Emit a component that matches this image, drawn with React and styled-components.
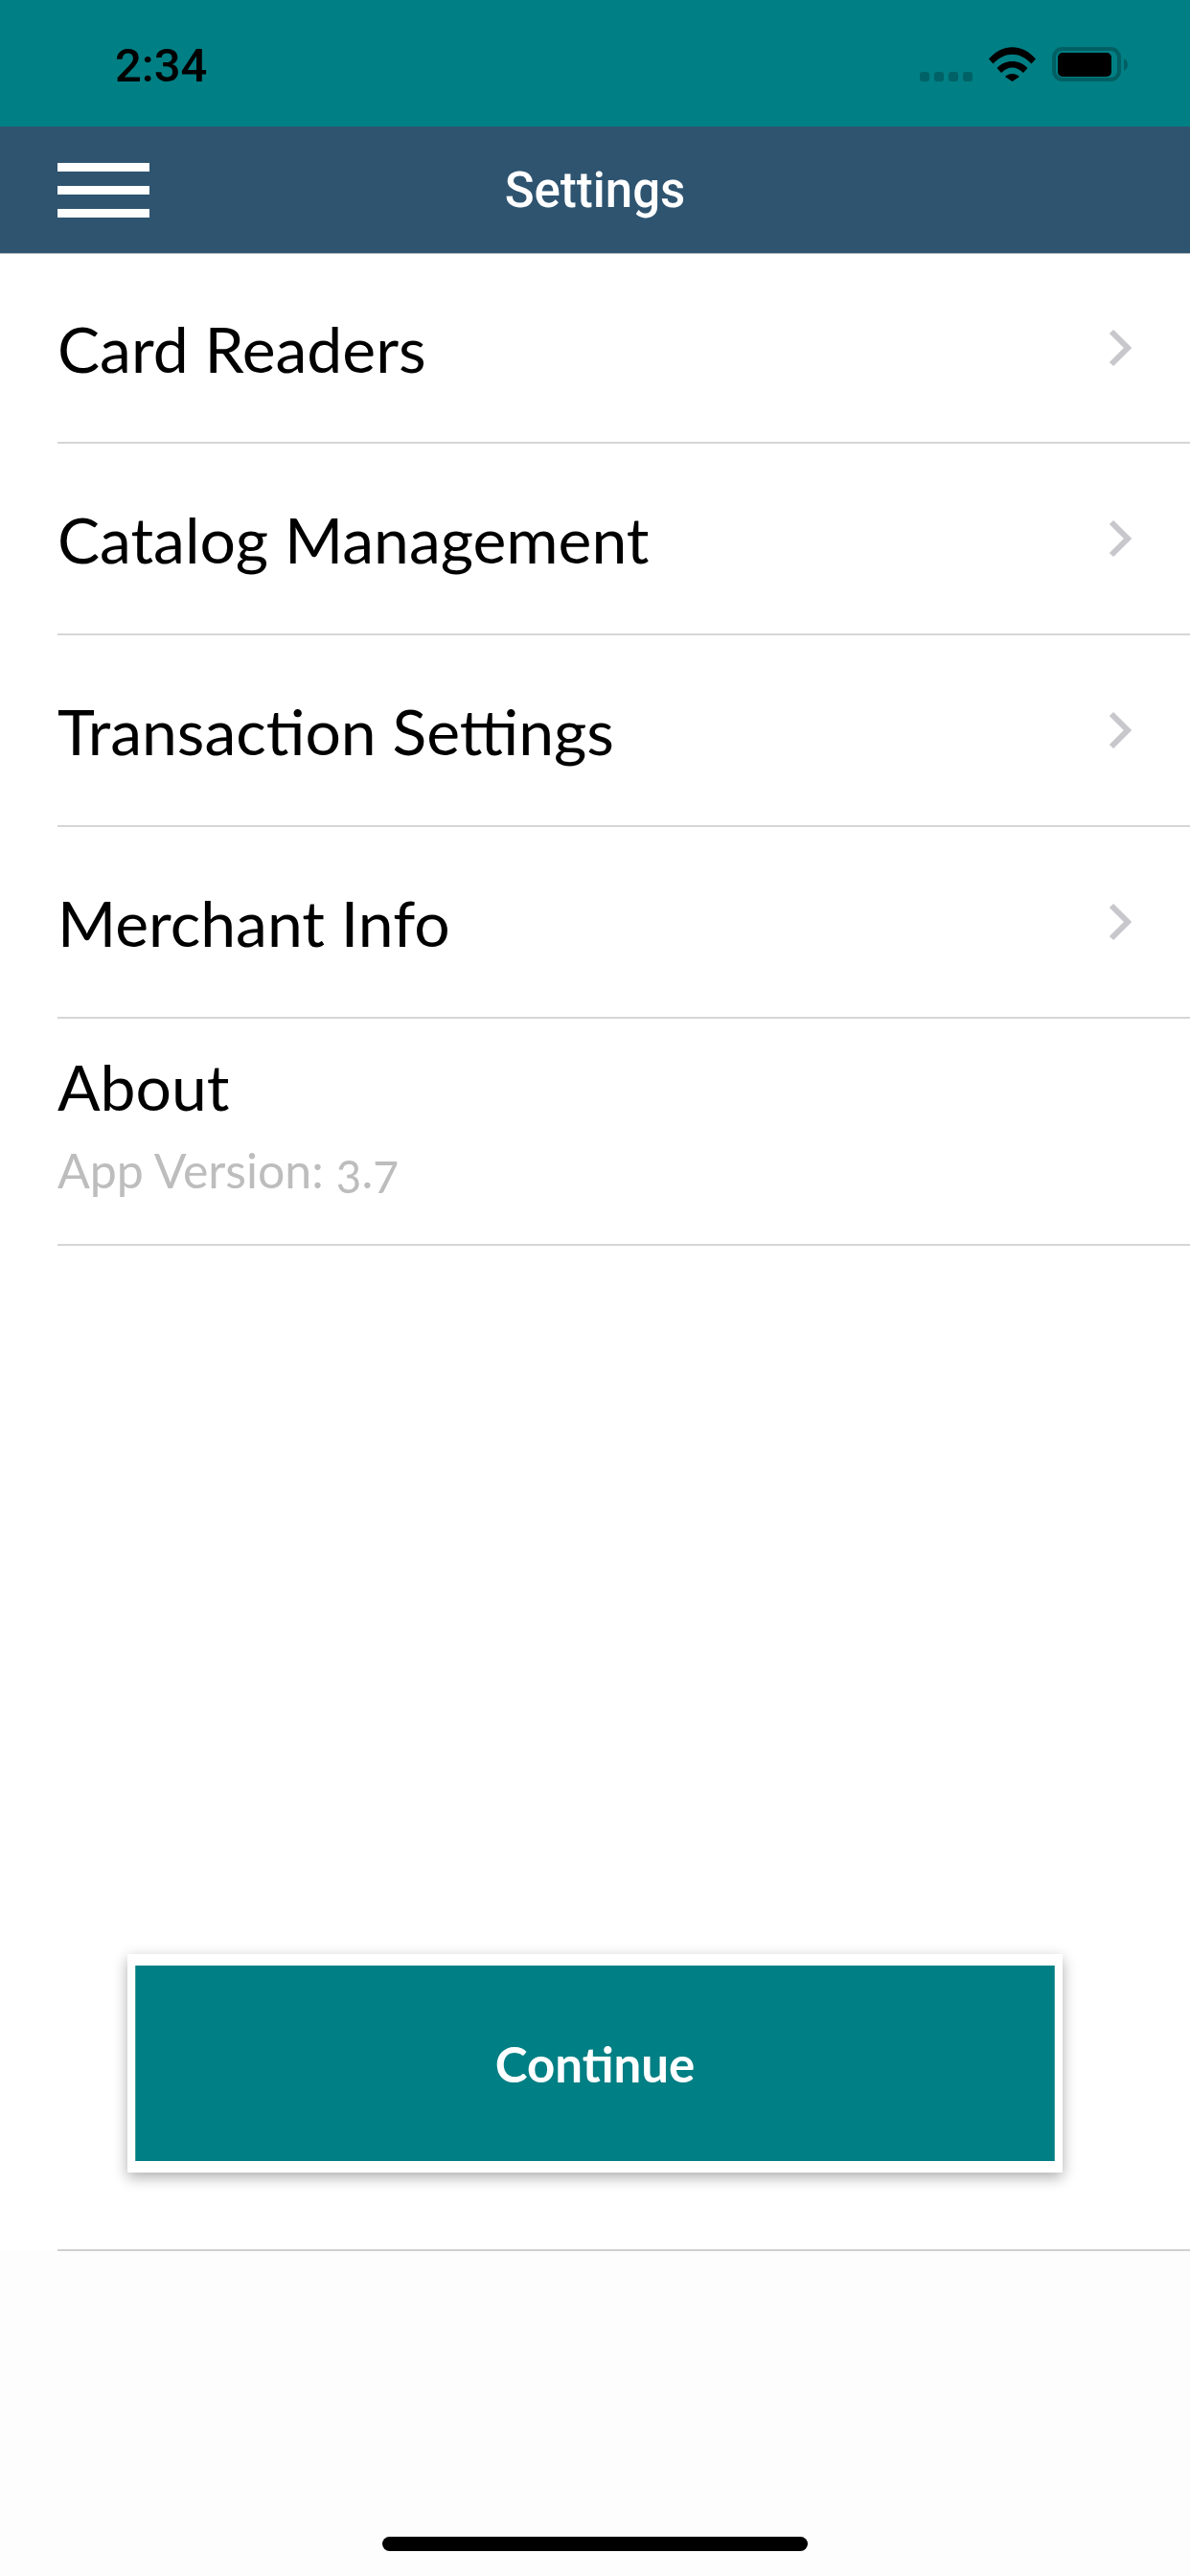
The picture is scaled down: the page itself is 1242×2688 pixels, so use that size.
import React from 'react';
import styled, { createGlobalStyle } from 'styled-components';

const GlobalStyle = createGlobalStyle`
  html, body {
    margin: 0;
    padding: 0;
    background: #ffffff;
  }
`;

const Page = styled.div`
  width: 1242px;
  height: 2688px;
  display: flex;
  flex-direction: column;
  overflow: hidden;
  background: #ffffff;
`;

const StatusBar = styled.div`
  height: 132px;
  flex: none;
  box-sizing: border-box;
  padding: 0 65px 0 120px;
  display: flex;
  align-items: center;
  justify-content: space-between;
  background: #007f84;
`;

const Time = styled.span`
  font-family: Roboto, sans-serif;
  font-weight: 500;
  font-size: 49px;
  color: #000000;
  position: relative;
  top: 2px;
`;

const StatusIcons = styled.div`
  display: flex;
  align-items: flex-end;
  height: 36px;
  margin-top: 2px;
`;

const SignalDots = styled.div`
  display: flex;
  gap: 5px;
  margin-right: 17px;
`;

const SignalDot = styled.span`
  width: 10px;
  height: 10px;
  border-radius: 3px;
  background: #006266;
`;

const NavBar = styled.div`
  height: 133px;
  flex: none;
  box-sizing: border-box;
  padding-left: 60px;
  display: flex;
  align-items: center;
  position: relative;
  background: #2e5470;
  border-bottom: 1px solid #b4b9bc;
`;

const Hamburger = styled.div`
  width: 96px;
  height: 57px;
  display: flex;
  flex-direction: column;
  justify-content: space-between;
`;

const HamburgerBar = styled.span`
  height: 9px;
  background: #ffffff;
`;

const NavTitle = styled.span`
  flex: 1;
  margin-right: 156px;
  text-align: center;
  font-family: Roboto, sans-serif;
  font-weight: 500;
  font-size: 51px;
  color: #ffffff;
`;

const Row = styled.div`
  height: ${(p) => p.$height}px;
  flex: none;
  box-sizing: border-box;
  margin-left: 60px;
  padding-right: 60px;
  display: flex;
  align-items: center;
  justify-content: space-between;
  border-bottom: 2px solid #d6d6d6;
`;

const RowLabel = styled.span`
  font-family: Lato, sans-serif;
  font-size: 66px;
  color: #000000;
`;

const AboutRow = styled.div`
  height: 237px;
  flex: none;
  box-sizing: border-box;
  margin-left: 60px;
  padding-top: 31px;
  display: flex;
  flex-direction: column;
  gap: 18px;
  border-bottom: 2px solid #d6d6d6;
`;

const VersionText = styled.span`
  font-family: Lato, sans-serif;
  font-size: 50px;
  font-variant-numeric: oldstyle-nums;
  color: #bdbdbd;
`;

const Spacer = styled.div`
  flex: 1;
`;

const ContinueFrame = styled.div`
  width: 976px;
  height: 228px;
  flex: none;
  box-sizing: border-box;
  align-self: center;
  padding: 12px 8px;
  background: #ffffff;
  box-shadow: 0 5px 14px rgba(0, 0, 0, 0.32);
`;

const ContinueButton = styled.div`
  height: 100%;
  display: flex;
  align-items: center;
  justify-content: center;
  background: #007f84;
  border-left: 1px solid #3b9da1;
  border-right: 1px solid #3b9da1;
  font-family: Lato, sans-serif;
  font-weight: 700;
  font-size: 51px;
  color: #ffffff;
`;

const BottomDivider = styled.div`
  height: 2px;
  flex: none;
  margin: 80px 0 0 60px;
  background: #d0d0d0;
`;

const BottomArea = styled.div`
  height: 339px;
  flex: none;
  box-sizing: border-box;
  padding-bottom: 26px;
  display: flex;
  align-items: flex-end;
  justify-content: center;
  background: #fdfdfd;
`;

const HomeIndicator = styled.div`
  width: 444px;
  height: 15px;
  border-radius: 8px;
  background: #000000;
`;

const WifiIcon = () => (
  <svg width="49" height="36" viewBox="0 0 49 36" style={{ marginRight: 17 }}>
    <path d="M0 12.5 C14 -4 35 -4 49 12.5 L44.5 17.5 C32 4.5 17 4.5 4.5 17.5 Z" fill="#000" />
    <path d="M8.5 22 C17 12.5 32 12.5 40.500 22 L36 27 C29 19.500 20 19.500 13 27 Z" fill="#000" />
    <path d="M17 31 C21 27 28 27 32 31 L24.500 36 Z" fill="#000" />
  </svg>
);

const BatteryIcon = () => (
  <svg width="79" height="36" viewBox="0 0 79 36">
    <rect x="2" y="2" width="68" height="32" rx="9" fill="none" stroke="#005f63" strokeWidth="4" />
    <rect x="6" y="6" width="56" height="25" rx="5" fill="#000" />
    <path d="M75 12 C78 14 79 16 79 18.500 C79 21 78 23 75 25 Z" fill="#005f63" />
  </svg>
);

const Chevron = () => (
  <svg width="26" height="40" viewBox="0 0 26 40">
    <path d="M4 3 L21 20 L4 37" fill="none" stroke="#c7c7cc" strokeWidth="6" />
  </svg>
);

const menuItems = [
  { label: 'Card Readers', height: 198 },
  { label: 'Catalog Management', height: 200 },
  { label: 'Transaction Settings', height: 200 },
  { label: 'Merchant Info', height: 200 },
];

export default function App() {
  return (
    <Page>
      <GlobalStyle />
      <StatusBar>
        <Time>2:34</Time>
        <StatusIcons>
          <SignalDots>
            {[0, 1, 2, 3].map((i) => (
              <SignalDot key={i} />
            ))}
          </SignalDots>
          <WifiIcon />
          <BatteryIcon />
        </StatusIcons>
      </StatusBar>
      <NavBar>
        <Hamburger>
          <HamburgerBar />
          <HamburgerBar />
          <HamburgerBar />
        </Hamburger>
        <NavTitle>Settings</NavTitle>
      </NavBar>
      {menuItems.map((item) => (
        <Row key={item.label} $height={item.height}>
          <RowLabel>{item.label}</RowLabel>
          <Chevron />
        </Row>
      ))}
      <AboutRow>
        <RowLabel>About</RowLabel>
        <VersionText>App Version: 3.7</VersionText>
      </AboutRow>
      <Spacer />
      <ContinueFrame>
        <ContinueButton>Continue</ContinueButton>
      </ContinueFrame>
      <BottomDivider />
      <BottomArea>
        <HomeIndicator />
      </BottomArea>
    </Page>
  );
}
